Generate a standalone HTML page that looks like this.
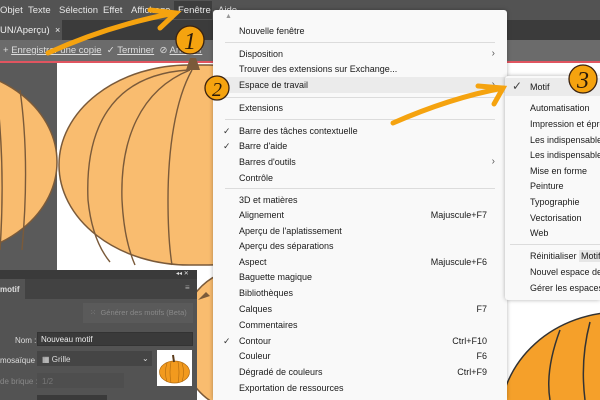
<!DOCTYPE html>
<html><head><meta charset="utf-8"><style>
*{margin:0;padding:0;box-sizing:border-box}
html,body{width:600px;height:400px;overflow:hidden}
body{position:relative;background:#535353;font-family:"Liberation Sans",sans-serif;font-size:9px}
.abs{position:absolute}
.mb span{position:absolute;top:5px;color:#e6e6e6;font-size:9.5px}
.menu{position:absolute;left:213px;top:10px;width:294px;height:390px;background:#f9f9f9;border-radius:3px 3px 0 0;box-shadow:0 0 4px rgba(0,0,0,.3);overflow:hidden}
.it{position:absolute;left:26px;color:#1a1a1a;font-size:9px;white-space:nowrap}
.sc{position:absolute;right:20px;color:#1a1a1a;font-size:9px}
.sep{position:absolute;left:12px;right:12px;height:1px;background:#dcdcdc}
.ck{position:absolute;left:10px;color:#333;font-size:9px}
.ar{position:absolute;right:12px;color:#555;font-size:10px}
.sub{position:absolute;left:505px;top:76px;width:95px;height:224px;background:#f9f9f9;border-radius:3px 0 0 3px;box-shadow:0 0 4px rgba(0,0,0,.3);overflow:hidden}
.sub .it{left:25px}
.panel{position:absolute;left:0;top:270px;width:197px;height:130px;background:#535353;overflow:hidden}
.pl{position:absolute;color:#ddd;font-size:8px;white-space:nowrap}
</style></head><body>
<div class="abs mb" style="left:0;top:0;width:600px;height:20px;background:#535353">
<span style="left:0">Objet</span><span style="left:28px">Texte</span><span style="left:59px">Sélection</span><span style="left:103px">Effet</span><span style="left:131px">Affichage</span>
<div class="abs" style="left:174px;top:1px;width:38px;height:18px;background:#3d3d3d"></div>
<span style="left:178px">Fenêtre</span><span style="left:218px">Aide</span>
</div>
<div class="abs" style="left:0;top:20px;width:600px;height:20px;background:#3b3b3b"></div>
<div class="abs" style="left:0;top:20px;width:62px;height:20px;background:#535353"></div>
<div class="abs" style="left:0;top:25px;color:#eee;font-size:9.5px">UN/Aperçu)</div>
<div class="abs" style="left:55px;top:25px;color:#eee;font-size:9px">×</div>
<div class="abs" style="left:0;top:40px;width:600px;height:21px;background:#6b6b6b"></div>
<div class="abs" style="left:3px;top:45px;color:#ddd;font-size:9.5px;white-space:nowrap">+ <u>Enregistrer une copie</u> &nbsp;✓ <u>Terminer</u> &nbsp;⊘ <u>Annuler</u></div>
<div class="abs" style="left:0;top:61px;width:600px;height:2px;background:#e05560"></div>
<div class="abs" style="left:0;top:63px;width:57px;height:207px;background:#5a5a5a"></div>
<div class="abs" style="left:57px;top:63px;width:543px;height:337px;background:#fff"></div>
<svg class="abs" style="left:0;top:0" width="600" height="400">
<g fill="#f9bc6f" stroke="#7a5a3a" stroke-width="1.5">
<ellipse cx="-60" cy="162" rx="117" ry="94"/>
<rect x="59" y="65" width="280" height="200" rx="130" ry="100"/>
<ellipse cx="240" cy="340" rx="60" ry="70"/>
</g>
<g fill="none" stroke="#7a5a3a" stroke-width="1.4">
<path d="M20 90 Q30 160 22 250 M-5 80 Q6 160 0 250"/>
<path d="M188 70 C110 75 85 130 88 200 Q92 240 110 262"/>
<path d="M190 70 C140 90 120 140 122 200 Q124 240 135 265"/>
<path d="M192 70 C175 100 168 150 168 200 Q168 240 172 265"/>
</g>
<path d="M186 70 L200 70 L196 58 L190 58 Z" fill="#7a5a3a"/>
<path d="M198 300 L206 292 L210 296 Z" fill="#7a5a3a"/>
<g fill="#f5a02a" stroke="#333" stroke-width="1.5">
<ellipse cx="620" cy="420" rx="120" ry="108"/>
<path d="M560 330 Q545 370 550 400 M590 322 Q580 360 585 400" fill="none"/>
</g>
</svg>
<div class="menu">
<div class="abs" style="left:12px;top:3px;color:#999;font-size:7px">▲</div>
<div class="it" style="top:16px">Nouvelle fenêtre</div>
<div class="sep" style="top:32px"></div>
<div class="it" style="top:39px">Disposition</div><div class="ar" style="top:38px">›</div>
<div class="it" style="top:54px">Trouver des extensions sur Exchange...</div>
<div class="abs" style="left:0;top:67px;width:294px;height:16px;background:#ebebeb"></div>
<div class="it" style="top:70px">Espace de travail</div><div class="ar" style="top:69px">›</div>
<div class="sep" style="top:87px"></div>
<div class="it" style="top:93px">Extensions</div>
<div class="sep" style="top:109px"></div>
<div class="ck" style="top:116px">✓</div><div class="it" style="top:116px">Barre des tâches contextuelle</div>
<div class="ck" style="top:131px">✓</div><div class="it" style="top:131px">Barre d'aide</div>
<div class="it" style="top:147px">Barres d'outils</div><div class="ar" style="top:146px">›</div>
<div class="it" style="top:163px">Contrôle</div>
<div class="sep" style="top:178px"></div>
<div class="it" style="top:185px">3D et matières</div>
<div class="it" style="top:200px">Alignement</div><div class="sc" style="top:200px">Majuscule+F7</div>
<div class="it" style="top:216px">Aperçu de l'aplatissement</div>
<div class="it" style="top:231px">Aperçu des séparations</div>
<div class="it" style="top:247px">Aspect</div><div class="sc" style="top:247px">Majuscule+F6</div>
<div class="it" style="top:262px">Baguette magique</div>
<div class="it" style="top:278px">Bibliothèques</div>
<div class="it" style="top:294px">Calques</div><div class="sc" style="top:294px">F7</div>
<div class="it" style="top:310px">Commentaires</div>
<div class="ck" style="top:326px">✓</div><div class="it" style="top:326px">Contour</div><div class="sc" style="top:326px">Ctrl+F10</div>
<div class="it" style="top:341px">Couleur</div><div class="sc" style="top:341px">F6</div>
<div class="it" style="top:357px">Dégradé de couleurs</div><div class="sc" style="top:357px">Ctrl+F9</div>
<div class="it" style="top:373px">Exportation de ressources</div>
</div>
<div class="sub">
<div class="abs" style="left:0;top:2px;width:95px;height:18px;background:#ebebeb"></div>
<div class="abs" style="left:7px;top:3px;color:#444;font-size:12px">✓</div>
<div class="it" style="top:6px">Motif</div>
<div class="it" style="top:27px">Automatisation</div>
<div class="it" style="top:43px">Impression et épreuves</div>
<div class="it" style="top:59px">Les indispensables</div>
<div class="it" style="top:74px">Les indispensables</div>
<div class="it" style="top:90px">Mise en forme</div>
<div class="it" style="top:105px">Peinture</div>
<div class="it" style="top:121px">Typographie</div>
<div class="it" style="top:137px">Vectorisation</div>
<div class="it" style="top:152px">Web</div>
<div class="sep" style="top:168px;left:5px;right:0"></div>
<div class="it" style="top:175px">Réinitialiser <span style="background:#e6e6e6;padding:1px 2px">Motif</span></div>
<div class="it" style="top:191px">Nouvel espace de travail</div>
<div class="it" style="top:207px">Gérer les espaces de travail</div>
</div>
<div class="panel">
<div class="abs" style="left:0;top:0;width:197px;height:9px;background:#3a3a3a"></div>
<div class="pl" style="left:176px;top:0;font-size:6px">◂◂ ✕</div>
<div class="abs" style="left:0;top:9px;width:197px;height:20px;background:#424242"></div>
<div class="abs" style="left:0;top:9px;width:25px;height:20px;background:#535353"></div>
<div class="pl" style="left:0;top:15px;font-weight:bold">motif</div>
<div class="pl" style="left:185px;top:13px;color:#aaa">≡</div>
<div class="abs" style="left:83px;top:33px;width:110px;height:20px;background:#5a5a5a"></div>
<div class="pl" style="left:90px;top:38px;color:#888;font-size:7.5px">⁙ &nbsp;Générer des motifs (Beta)</div>
<div class="pl" style="left:15px;top:66px">Nom :</div>
<div class="abs" style="left:37px;top:62px;width:156px;height:14px;background:#3a3a3a;border:1px solid #333"></div>
<div class="pl" style="left:41px;top:65px;color:#eee">Nouveau motif</div>
<div class="pl" style="left:0;top:86px">mosaïque :</div>
<div class="abs" style="left:37px;top:81px;width:115px;height:15px;background:#454545"></div>
<div class="pl" style="left:42px;top:85px">▦ Grille</div>
<div class="pl" style="left:142px;top:84px">⌄</div>
<div class="pl" style="left:0;top:107px;color:#888">de brique :</div>
<div class="abs" style="left:37px;top:103px;width:87px;height:15px;background:#4e4e4e"></div>
<div class="pl" style="left:42px;top:107px;color:#777">1/2</div>
<div class="abs" style="left:157px;top:80px;width:35px;height:36px;background:#fff"></div>
<svg class="abs" style="left:157px;top:80px" width="35" height="36"><ellipse cx="17.5" cy="22" rx="15" ry="11" fill="#f29a1e" stroke="#b06a10" stroke-width=".7"/><path d="M17 12 L16 5" stroke="#5a3a1a" stroke-width="2"/><path d="M10 13 Q7 22 10 32 M14 12 Q12 22 14 33 M21 12 Q23 22 21 33 M25 13 Q28 22 25 32" stroke="#b06a10" stroke-width=".6" fill="none"/></svg>
<div class="abs" style="left:37px;top:125px;width:70px;height:5px;background:#3a3a3a"></div>
</div>
<svg class="abs" style="left:0;top:0" width="600" height="400">
<g stroke="#f5a30f" stroke-width="5" fill="none" stroke-linecap="round">
<path d="M48 53 Q110 25 175 13"/>
<path d="M150 10 L176 13 L160 28"/>
<path d="M393 123 Q450 98 503 88"/>
<path d="M478 86 L503 88 L494 104"/>
</g>
<g fill="#f5a30f" stroke="#3a2210" stroke-width="1.3">
<circle cx="190" cy="40" r="14"/>
<circle cx="217" cy="88" r="12"/>
<circle cx="583" cy="79" r="14"/>
</g>
<g font-family="Liberation Serif,serif" font-style="italic" fill="#2a1a0a" text-anchor="middle">
<text x="190" y="49" font-size="24">1</text>
<text x="217" y="96" font-size="20">2</text>
<text x="583" y="88" font-size="24">3</text>
</g>
</svg>
</body></html>
